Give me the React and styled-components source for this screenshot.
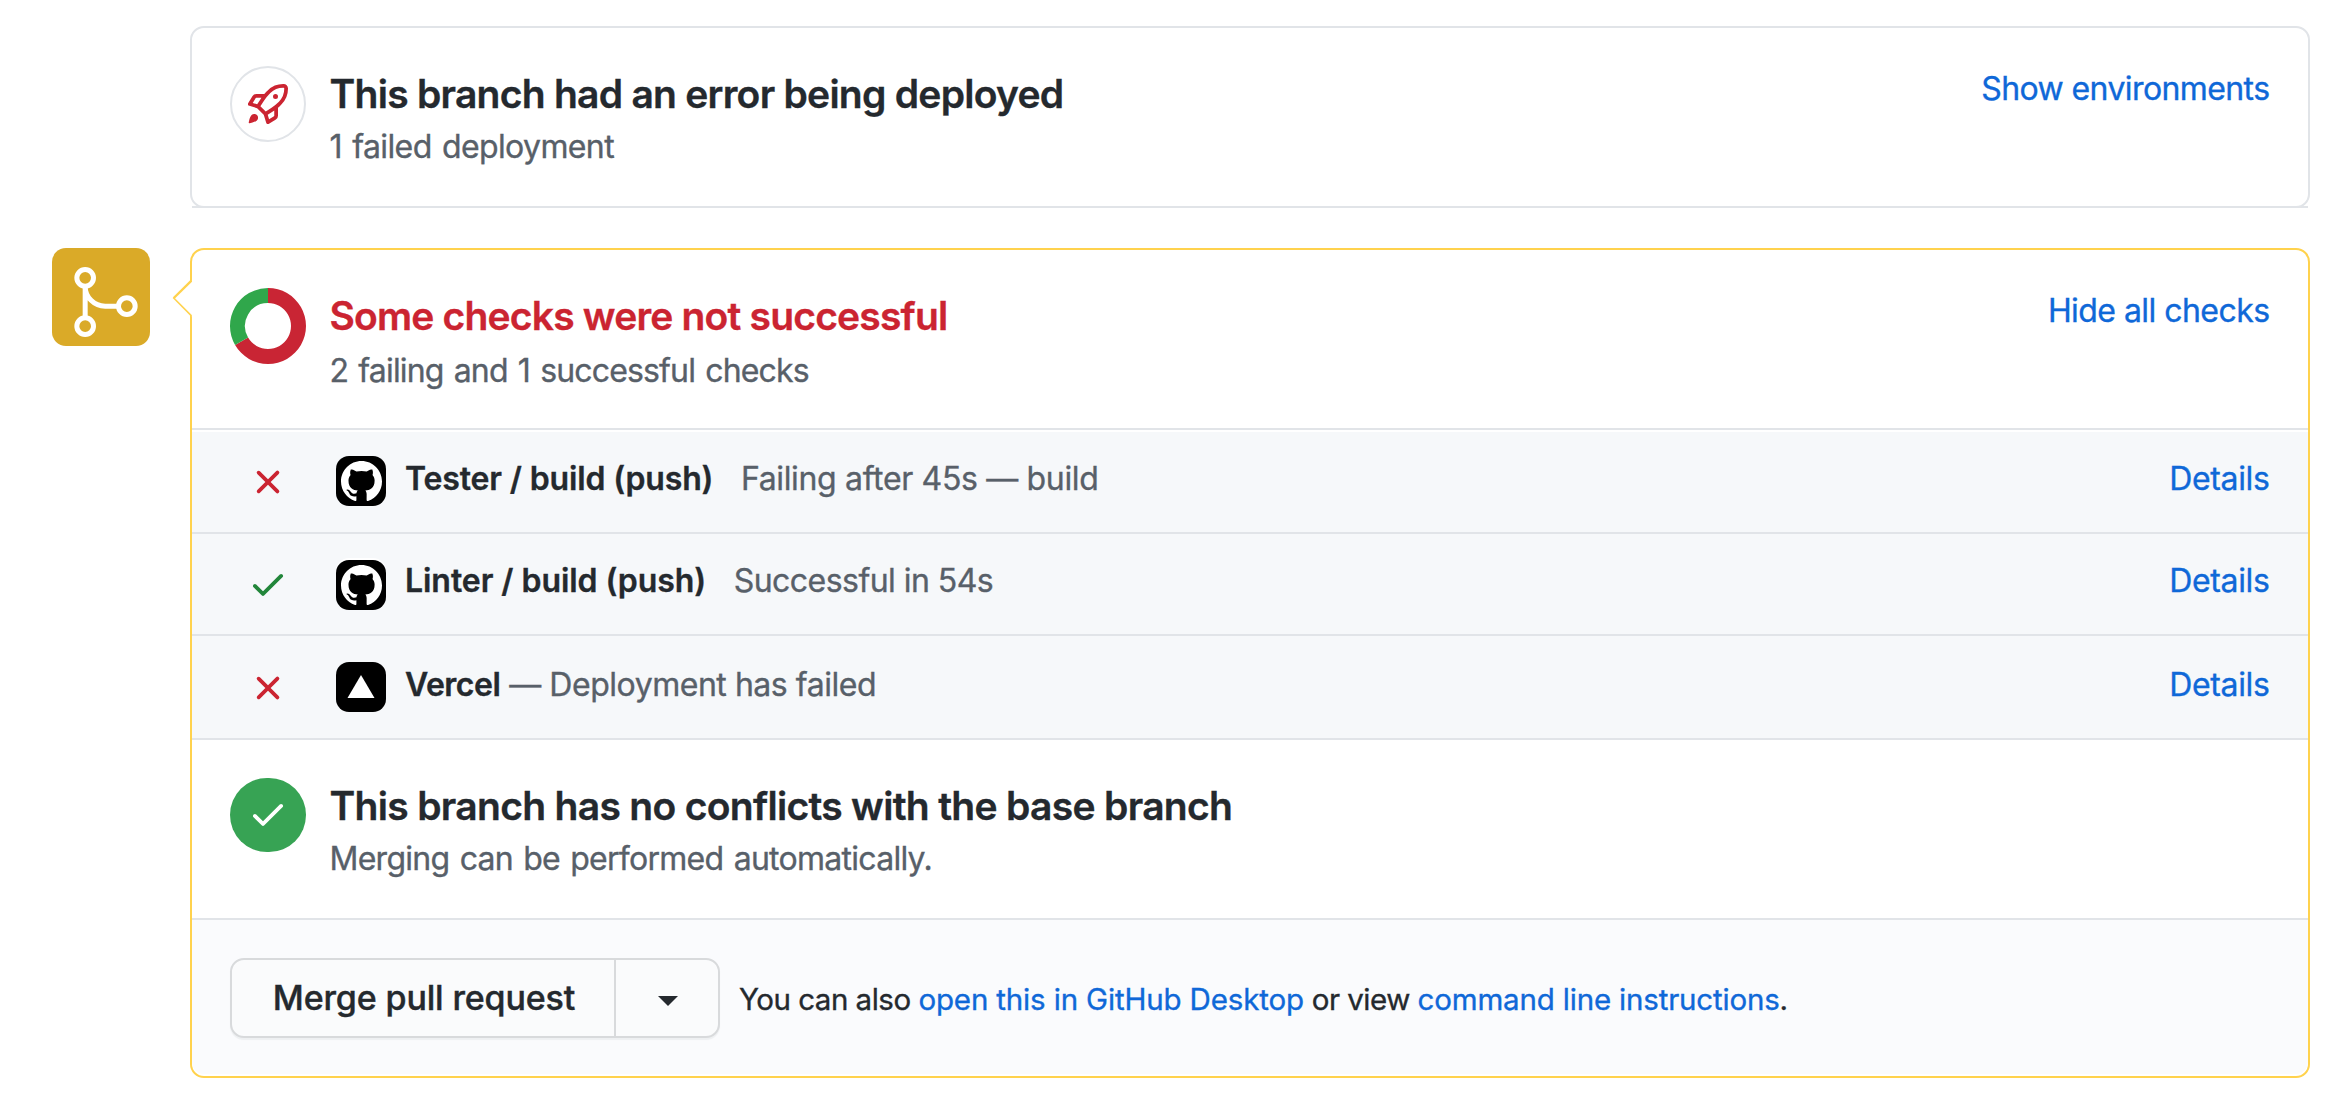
import React from "react";
import styled, { createGlobalStyle, css } from "styled-components";

const GlobalStyle = createGlobalStyle`
  *, *::before, *::after { box-sizing: border-box; }
  body {
    margin: 0;
    background: #fff;
    color: #24292e;
    font-family: Inter, "Liberation Sans", sans-serif;
    -webkit-font-smoothing: antialiased;
    -webkit-text-stroke: 0.35px currentColor;
  }
`;

const Page = styled.main`
  display: flex;
  flex-direction: column;
  gap: 40px;
  padding: 26px 26px 20px 52px;
`;

const TimelineItem = styled.div`
  display: grid;
  grid-template-columns: 98px 1fr;
  column-gap: 40px;
  align-items: start;
`;

const Badge = styled.div`
  display: flex;
  grid-column: 1;
  align-items: center;
  justify-content: center;
  width: 98px;
  height: 98px;
  padding: 10px 0 0 10px;
  border-radius: 14px;
  background: #daaa28;
`;

const Card = styled.section`
  position: relative;
  grid-column: 2;
  border: 2px solid ${(p) => (p.$attention ? "#ffd24d" : "#e1e4e8")};
  border-radius: 14px;
  background: #fff;
  ${(p) =>
    !p.$attention &&
    css`
      &::after {
        content: "";
        position: absolute;
        left: 0;
        right: 0;
        bottom: -2px;
        height: 2px;
        background: #e1e4e8;
      }
    `}
`;

const Pointer = styled.svg`
  position: absolute;
  left: -20px;
  top: 28px;
`;

const Section = styled.div`
  display: flex;
  align-items: flex-start;
  height: 178px;
  padding: 38px 38px 0;
`;

const StatusCircle = styled.div`
  display: flex;
  flex: none;
  align-items: center;
  justify-content: center;
  width: 76px;
  height: ${(p) => (p.$success ? 74 : 76)}px;
  margin-right: 23.5px;
  border: ${(p) => (p.$outlined ? "2px solid #e1e4e8" : "0")};
  border-radius: ${(p) => (p.$success ? "37px" : "50%")};
  background: ${(p) => (p.$success ? "#37a354" : "transparent")};
  color: ${(p) => (p.$success ? "#fff" : "#cb2431")};

  svg {
    display: block;
    flex: none;
    margin-top: ${(p) => (p.$success ? -2 : 0)}px;
  }
`;

const SectionText = styled.div`
  display: flex;
  flex: 1;
  flex-direction: column;
  gap: ${(p) => p.$gap || 0}px;
`;

const Title = styled.h3`
  margin: 0;
  color: ${(p) => (p.$danger ? "#cb2431" : "#24292e")};
  font-size: 39px;
  font-weight: 600;
  line-height: 56px;
  letter-spacing: ${(p) => p.$tracking}px;
  white-space: nowrap;
`;

const Subtitle = styled.p`
  margin: 0;
  color: #586069;
  font-size: 32px;
  line-height: 49px;
  letter-spacing: ${(p) => p.$tracking}px;
  word-spacing: 2px;
  white-space: nowrap;
`;

const Link = styled.a`
  color: #0f68d8;
  letter-spacing: ${(p) => p.$tracking}px;
  text-decoration: none;
  cursor: pointer;
`;

const SectionLink = styled(Link)`
  margin: -2px 0.5px 0 0;
  font-size: 32px;
  line-height: 49px;
`;

const CheckList = styled.div`
  padding-top: 2px;
  border-top: 2px solid #e1e4e8;
`;

const CheckRow = styled.div`
  display: flex;
  align-items: flex-start;
  height: ${(p) => (p.$tall ? 104 : 102)}px;
  padding: ${(p) => (p.$tall ? 26 : 24)}px 38px 0;
  border-bottom: 2px solid #e1e4e8;
  background: #f6f8fa;
`;

const CheckIcon = styled.div`
  display: flex;
  flex: none;
  width: 40px;
  height: 40px;
  margin: 6px 48px 0 18px;
  color: ${(p) => (p.$ok ? "#22863a" : "#cb2431")};
`;

const Avatar = styled.div`
  display: flex;
  flex: none;
  align-items: center;
  justify-content: center;
  width: 50px;
  height: 50px;
  margin: ${(p) => (p.$lowered ? 2 : 0)}px 19px 0 0;
  border-radius: 13px;
  background: #000;
  box-shadow: ${(p) => (p.$lowered ? "0 -2px 0 #fff" : "none")};
`;

const CheckText = styled.div`
  display: flex;
  flex: 1;
  font-size: 32px;
  line-height: 45px;
  white-space: nowrap;
`;

const CheckName = styled.strong`
  font-weight: 600;
  letter-spacing: ${(p) => p.$tracking}px;
  margin-right: ${(p) => p.$gap}px;
`;

const CheckNote = styled.span`
  color: #586069;
  letter-spacing: ${(p) => p.$tracking}px;
`;

const DetailsLink = styled(Link)`
  margin-right: 0.5px;
  font-size: 32px;
  line-height: 45px;
`;

const Footer = styled.div`
  display: flex;
  align-items: flex-start;
  height: 156px;
  margin-bottom: 2px;
  padding: 38px 38px 0;
  border-top: 2px solid #e1e4e8;
  border-radius: 0 0 12px 12px;
  background: #fafbfd;
`;

const ButtonGroup = styled.div`
  display: flex;
  height: 80px;
  margin-right: 19px;
  border: 2px solid #d8dadc;
  border-radius: 14px;
  background: #fafbfc;
  box-shadow: 0 2px 1px rgba(27, 31, 35, 0.05);
`;

const MergeButton = styled.button`
  width: 384px;
  padding: 0 0 1px 2px;
  border: 0;
  border-right: 2px solid #d8dadc;
  background: transparent;
  color: #24292e;
  font-family: inherit;
  font-size: 34px;
  font-weight: 500;
  letter-spacing: -0.15px;
  line-height: 40px;
  -webkit-text-stroke: 0.4px #24292e;
`;

const CaretButton = styled.button`
  display: flex;
  align-items: center;
  justify-content: center;
  width: 102px;
  padding: 6px 0 0 2px;
  border: 0;
  background: transparent;
`;

const FooterText = styled.p`
  margin: 17px 0 0;
  font-size: 29.5px;
  line-height: 48px;
  letter-spacing: -0.5px;
  white-space: nowrap;
`;

const CHECK_PATH =
  "M13.78 4.22a.75.75 0 010 1.06l-7.25 7.25a.75.75 0 01-1.06 0L2.22 9.28a.75.75 0 011.06-1.06L6 10.94l6.72-6.72a.75.75 0 011.06 0z";
const X_PATH =
  "M3.72 3.72a.75.75 0 011.06 0L8 6.94l3.22-3.22a.75.75 0 111.06 1.06L9.06 8l3.22 3.22a.75.75 0 11-1.06 1.06L8 9.06l-3.22 3.22a.75.75 0 01-1.06-1.06L6.94 8 3.72 4.78a.75.75 0 010-1.06z";
const ROCKET_PATH =
  "M14.064 0a8.75 8.75 0 00-6.187 2.563l-.459.458c-.314.314-.616.641-.904.979H3.31a1.75 1.75 0 00-1.49.833L.11 7.607a.75.75 0 00.418 1.11l3.102.954c.037.051.079.1.124.145l2.429 2.428c.046.046.094.088.145.125l.954 3.102a.75.75 0 001.11.418l2.774-1.707a1.75 1.75 0 00.833-1.49V9.485c.338-.288.665-.59.979-.904l.458-.459A8.75 8.75 0 0016 1.936V1.75A1.75 1.75 0 0014.25 0h-.186zM10.5 10.625c-.088.06-.177.118-.266.175l-2.35 1.521.548 1.783 1.949-1.2a.25.25 0 00.119-.213v-2.066zM3.678 8.116L5.2 5.766c.058-.09.117-.178.176-.266H3.309a.25.25 0 00-.213.119l-1.2 1.95 1.782.547zm5.26-4.493A7.25 7.25 0 0114.063 1.5h.186a.25.25 0 01.25.25v.186a7.25 7.25 0 01-2.123 5.127l-.459.458a15.21 15.21 0 01-2.499 2.02l-2.317 1.5-2.143-2.143 1.5-2.317a15.25 15.25 0 012.02-2.5l.458-.458h.002zM12 5a1 1 0 11-2 0 1 1 0 012 0zm-8.44 9.56a1.5 1.5 0 10-2.12-2.12c-.734.73-1.047 2.332-1.15 3.003a.23.23 0 00.265.265c.671-.103 2.273-.416 3.005-1.148z";
const MARK_PATH =
  "M8 0C3.58 0 0 3.58 0 8c0 3.54 2.29 6.53 5.47 7.59.4.07.55-.17.55-.38 0-.19-.01-.82-.01-1.49-2.01.37-2.53-.49-2.69-.94-.09-.23-.48-.94-.82-1.13-.28-.15-.68-.52-.01-.53.63-.01 1.08.58 1.23.82.72 1.21 1.87.87 2.33.66.07-.52.28-.87.51-1.07-1.78-.2-3.64-.89-3.64-3.95 0-.87.31-1.59.82-2.15-.08-.2-.36-1.02.08-2.12 0 0 .67-.21 2.2.82.64-.18 1.32-.27 2-.27.68 0 1.36.09 2 .27 1.53-1.04 2.2-.82 2.2-.82.44 1.1.16 1.92.08 2.12.51.56.82 1.27.82 2.15 0 3.07-1.87 3.75-3.65 3.95.29.25.54.73.54 1.48 0 1.07-.01 1.93-.01 2.2 0 .21.15.46.55.38A8.013 8.013 0 0016 8c0-4.42-3.58-8-8-8z";

const Octicon = ({ path, size = 40 }) => (
  <svg width={size} height={size} viewBox="0 0 16 16" fill="currentColor" aria-hidden="true">
    <path fillRule="evenodd" d={path} />
  </svg>
);

const MergeIcon = () => (
  <svg width="80" height="80" viewBox="0 0 24 24" fill="none" stroke="#fff" strokeWidth="1.5" aria-hidden="true">
    <circle cx="5.75" cy="4.75" r="2.5" />
    <circle cx="5.75" cy="19.25" r="2.5" />
    <circle cx="18.25" cy="13.25" r="2.5" />
    <path d="M5.75 7.25v9.5M5.75 7.25a6 6 0 006 6h4" />
  </svg>
);

const DonutChart = () => (
  <svg width="76" height="76" viewBox="0 0 76 76" aria-hidden="true">
    <path d="M38 0A38 38 0 1 1 5.09 57L18.08 49.5A23 23 0 1 0 38 15Z" fill="#c92534" />
    <path d="M5.09 57A38 38 0 0 1 38 0V15A23 23 0 0 0 18.08 49.5Z" fill="#30a74b" />
  </svg>
);

const GitHubMark = () => (
  <svg width="41" height="41" viewBox="0 0 16 16" fill="#fff" aria-hidden="true">
    <path d={MARK_PATH} />
  </svg>
);

const VercelMark = () => (
  <svg width="50" height="50" viewBox="0 0 50 50" fill="#fff" aria-hidden="true">
    <path d="M25 13L38.5 36H11.5Z" />
  </svg>
);

const CHECKS = [
  { name: "Tester / build (push)", note: "Failing after 45s — build", nt: -0.14, st: -0.34, gap: 27.5 },
  { name: "Linter / build (push)", note: "Successful in 54s", nt: -0.05, st: -0.54, gap: 27.5, ok: true, lowered: true },
  { name: "Vercel", note: "— Deployment has failed", nt: -0.5, st: -0.47, gap: 9, tall: true, vercel: true },
];

export default function App() {
  return (
    <>
      <GlobalStyle />
      <Page>
        <TimelineItem>
          <Card>
            <Section>
              <StatusCircle $outlined>
                <Octicon path={ROCKET_PATH} />
              </StatusCircle>
              <SectionText>
                <Title $tracking={-0.735}>This branch had an error being deployed</Title>
                <Subtitle $tracking={-0.62}>1 failed deployment</Subtitle>
              </SectionText>
              <SectionLink $tracking={-0.59}>Show environments</SectionLink>
            </Section>
          </Card>
        </TimelineItem>

        <TimelineItem>
          <Badge>
            <MergeIcon />
          </Badge>
          <Card $attention>
            <Pointer width="20" height="40" viewBox="0 0 20 40" aria-hidden="true">
              <path d="M20 2.5L2 20L20 38.5Z" fill="#fff" />
              <path d="M19.5 2.5L1.8 20" fill="none" stroke="#ffd24d" strokeWidth="2.4" />
              <path d="M1.2 19.5L19.5 38" fill="none" stroke="#ffd24d" strokeWidth="1.6" />
            </Pointer>
            <Section>
              <StatusCircle>
                <DonutChart />
              </StatusCircle>
              <SectionText $gap={2}>
                <Title $danger $tracking={-0.8}>Some checks were not successful</Title>
                <Subtitle $tracking={-0.84}>2 failing and 1 successful checks</Subtitle>
              </SectionText>
              <SectionLink $tracking={-0.55}>Hide all checks</SectionLink>
            </Section>

            <CheckList>
              {CHECKS.map((c) => (
                <CheckRow key={c.name} $tall={c.tall}>
                  <CheckIcon $ok={c.ok}>
                    <Octicon path={c.ok ? CHECK_PATH : X_PATH} />
                  </CheckIcon>
                  <Avatar $lowered={c.lowered}>{c.vercel ? <VercelMark /> : <GitHubMark />}</Avatar>
                  <CheckText>
                    <CheckName $tracking={c.nt} $gap={c.gap}>{c.name}</CheckName>
                    <CheckNote $tracking={c.st}>{c.note}</CheckNote>
                  </CheckText>
                  <DetailsLink $tracking={-0.36}>Details</DetailsLink>
                </CheckRow>
              ))}
            </CheckList>

            <Section>
              <StatusCircle $success>
                <Octicon path={CHECK_PATH} />
              </StatusCircle>
              <SectionText>
                <Title $tracking={-0.685}>This branch has no conflicts with the base branch</Title>
                <Subtitle $tracking={-0.73}>Merging can be performed automatically.</Subtitle>
              </SectionText>
            </Section>

            <Footer>
              <ButtonGroup>
                <MergeButton type="button">Merge pull request</MergeButton>
                <CaretButton type="button" aria-label="Select merge method">
                  <svg width="20" height="10" viewBox="0 0 20 10" fill="#24292e" aria-hidden="true">
                    <path d="M0 0H20L10 10Z" />
                  </svg>
                </CaretButton>
              </ButtonGroup>
              <FooterText>
                You can also <Link $tracking={-0.15}>open this in GitHub Desktop</Link> or view{" "}
                <Link $tracking={-0.18}>command line instructions</Link>.
              </FooterText>
            </Footer>
          </Card>
        </TimelineItem>
      </Page>
    </>
  );
}
